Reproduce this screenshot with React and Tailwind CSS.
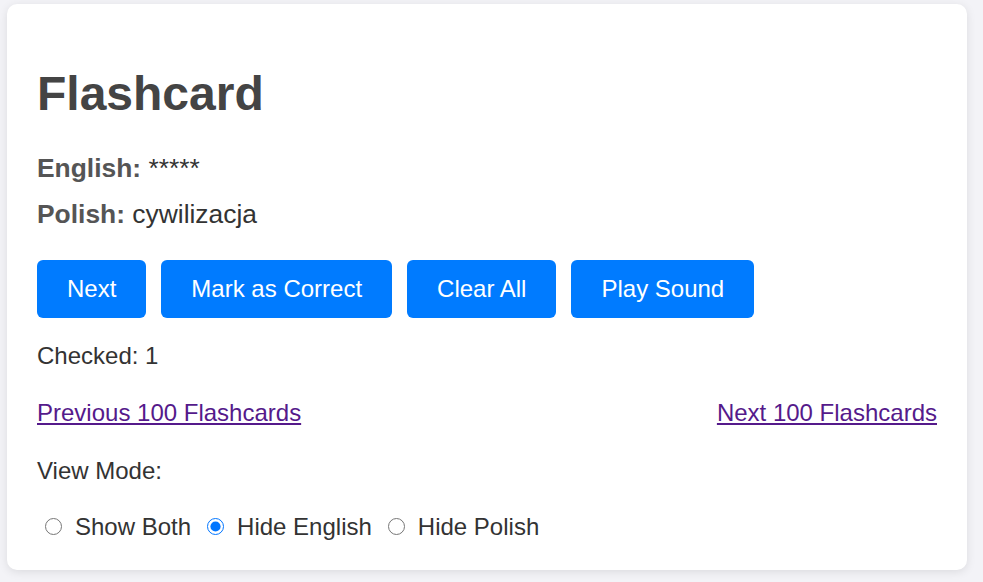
import React, { useState } from 'react';

const FONT = { fontFamily: '"Liberation Sans", Arial, Helvetica, sans-serif' };

const RadioOption = ({ label, value, checked, onChange }) => (
    <label className="flex items-center cursor-pointer">
        <input
            type="radio"
            name="viewMode"
            value={value}
            checked={checked}
            onChange={() => onChange(value)}
            className="w-[17px] h-[17px] m-0 ml-[8px] mr-[13px] accent-[#0075ff]"
        />
        <span>{label}</span>
    </label>
);

const App = () => {
    const [viewMode, setViewMode] = useState('hideEnglish');
    const [checked, setChecked] = useState(1);

    const buttons = ['Next', 'Mark as Correct', 'Clear All', 'Play Sound'];

    return (
        <div className="min-h-[582px] bg-[#f3f3f7] pt-[4px] pl-[7px]" style={FONT}>
            <div className="w-[960px] bg-white rounded-[10px] shadow-[0_2px_10px_rgba(0,0,0,0.1)] p-[30px] text-[24px] leading-[27.6px] text-[#333]">
                <h1 className="text-[48px] leading-[55px] font-bold text-[#444] mt-[32px] mb-[32px]">Flashcard</h1>

                {/* Word pair */}
                <p className="text-[26.4px] leading-[30.4px]">
                    <span className="font-bold text-[#555]">English:</span> *****
                </p>
                <p className="text-[26.4px] leading-[30.4px] mt-[16px]">
                    <span className="font-bold text-[#555]">Polish:</span> cywilizacja
                </p>

                <div className="flex gap-[15px] mt-[30px]">
                    {buttons.map(b => (
                        <button
                            key={b}
                            onClick={() => b === 'Mark as Correct' && setChecked(checked + 1)}
                            className="bg-[#007bff] text-white text-[24px] leading-[28px] px-[30px] py-[15px] rounded-[6px] cursor-pointer"
                        >
                            {b}
                        </button>
                    ))}
                </div>

                <p className="mt-[24px]">Checked: {checked}</p>

                <div className="flex justify-between mt-[30px]">
                    <a href="#" className="text-[#551a8b] underline">Previous 100 Flashcards</a>
                    <a href="#" className="text-[#551a8b] underline">Next 100 Flashcards</a>
                </div>

                <p className="mt-[30px]">View Mode:</p>

                <div className="flex items-center mt-[28px] gap-[8px]">
                    <RadioOption label="Show Both" value="showBoth" checked={viewMode === 'showBoth'} onChange={setViewMode} />
                    <RadioOption label="Hide English" value="hideEnglish" checked={viewMode === 'hideEnglish'} onChange={setViewMode} />
                    <RadioOption label="Hide Polish" value="hidePolish" checked={viewMode === 'hidePolish'} onChange={setViewMode} />
                </div>
            </div>
        </div>
    );
};

export default App;
